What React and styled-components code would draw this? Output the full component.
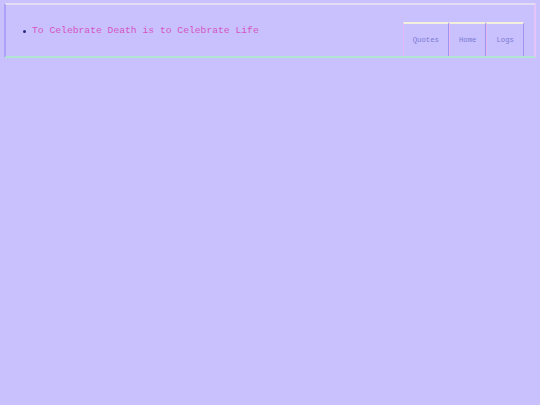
import React from "react";
import styled, { createGlobalStyle } from "styled-components";

const Global = createGlobalStyle`
  html, body { margin: 0; padding: 0; background: #c9c1fd; }
  body { font-family: "Liberation Mono", "Courier New", monospace; min-height: 405px; }
`;

const Header = styled.header`
  margin: 3px 4px 0 4px;
  height: 51px;
  display: flex;
  justify-content: space-between;
  align-items: flex-end;
  border-top: 2px solid #e4dcf2;
  border-left: 2px solid #aaa2f4;
  border-right: 2px solid #e6c4fa;
  border-bottom: 2px solid #b2e4d6;
  padding: 0 10px 0 0;
`;

const TitleList = styled.ul`
  margin: 0;
  padding: 0 0 0 17px;
  list-style: none;
  align-self: flex-start;
  margin-top: 20px;
`;

const TitleItem = styled.li`
  display: flex;
  align-items: center;
  font-size: 9.7px;
  line-height: 12px;
  color: #d455c4;
  &::before {
    content: "";
    width: 3px;
    height: 3px;
    border-radius: 50%;
    background: #2a2a80;
    margin-right: 6px;
  }
`;

const Tabs = styled.nav`
  display: flex;
  height: 34px;
`;

const Tab = styled.a`
  display: flex;
  align-items: center;
  justify-content: center;
  padding: 0 9px;
  font-size: 7.3px;
  color: #7a7cd4;
  text-decoration: none;
  border-top: 2px solid #f2f0dc;
  border-left: 1px solid #e6b8f2;
  border-right: 1px solid #9e96ee;
`;

export default function App() {
  return (
    <>
      <Global />
      <Header>
        <TitleList>
          <TitleItem>To Celebrate Death is to Celebrate Life</TitleItem>
        </TitleList>
        <Tabs>
          <Tab href="#">Quotes</Tab>
          <Tab href="#">Home</Tab>
          <Tab href="#">Logs</Tab>
        </Tabs>
      </Header>
    </>
  );
}
